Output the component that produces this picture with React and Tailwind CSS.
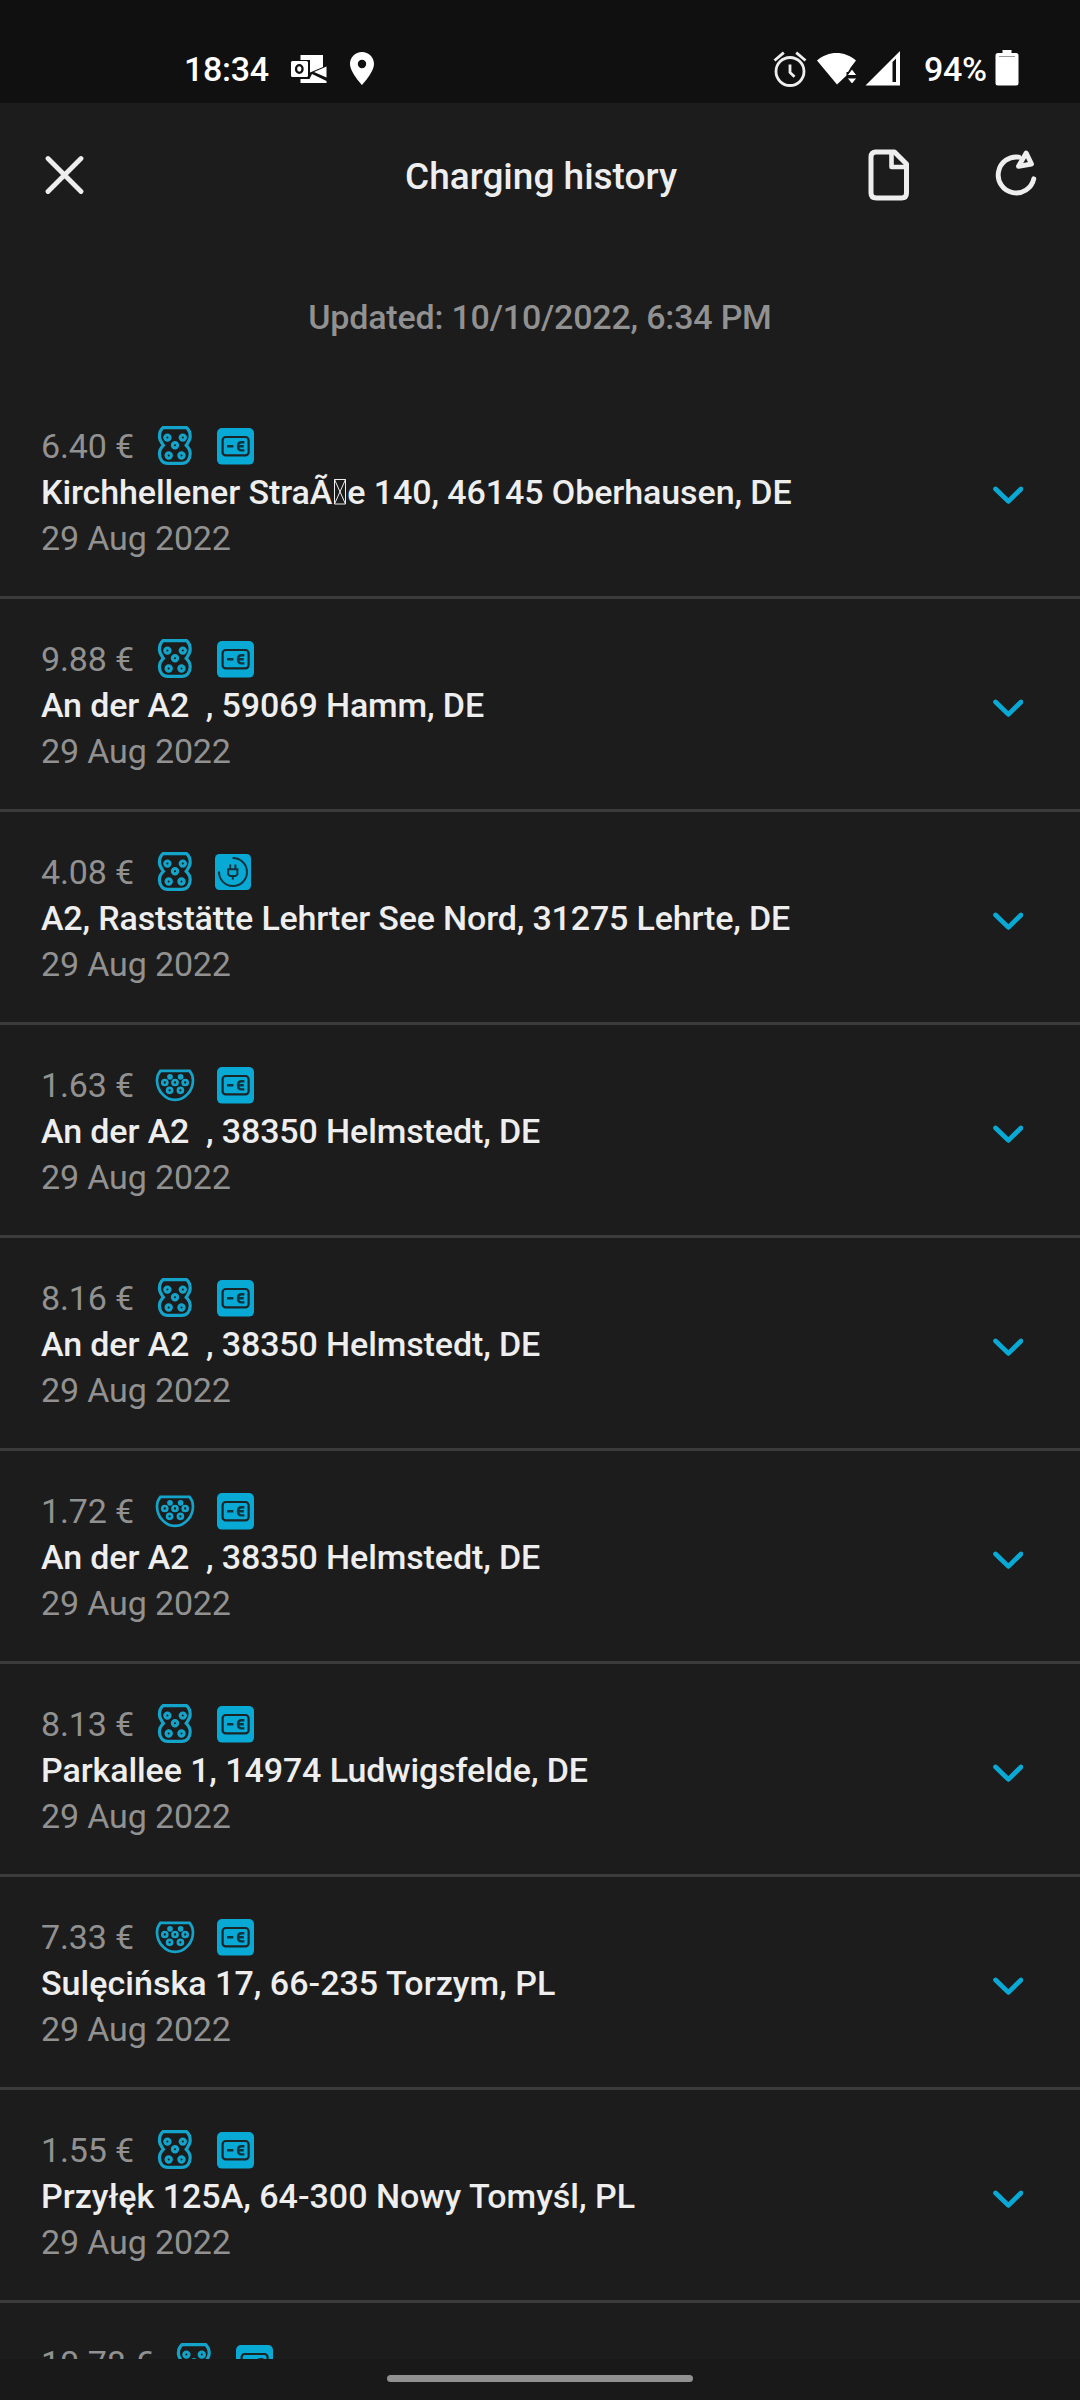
import React from "react";

const rows = [
  { price: "6.40 €", plug: "ccs", op: "card", address: ["Kirchhellener StraÃ", "e 140, 46145 Oberhausen, DE"], tracking: "tracking-[-0.09px]", date: "29 Aug 2022" },
  { price: "9.88 €", plug: "ccs", op: "card", address: ["An der A2  , 59069 Hamm, DE"], tracking: "tracking-[-0.13px]", date: "29 Aug 2022" },
  { price: "4.08 €", plug: "ccs", op: "plug", address: ["A2, Raststätte Lehrter See Nord, 31275 Lehrte, DE"], tracking: "tracking-[-0.17px]", date: "29 Aug 2022" },
  { price: "1.63 €", plug: "type2", op: "card", address: ["An der A2  , 38350 Helmstedt, DE"], tracking: "tracking-[-0.12px]", date: "29 Aug 2022" },
  { price: "8.16 €", plug: "ccs", op: "card", address: ["An der A2  , 38350 Helmstedt, DE"], tracking: "tracking-[-0.12px]", date: "29 Aug 2022" },
  { price: "1.72 €", plug: "type2", op: "card", address: ["An der A2  , 38350 Helmstedt, DE"], tracking: "tracking-[-0.12px]", date: "29 Aug 2022" },
  { price: "8.13 €", plug: "ccs", op: "card", address: ["Parkallee 1, 14974 Ludwigsfelde, DE"], tracking: "tracking-[-0.1px]", date: "29 Aug 2022" },
  { price: "7.33 €", plug: "type2", op: "card", address: ["Sulęcińska 17, 66-235 Torzym, PL"], tracking: "tracking-[0.03px]", date: "29 Aug 2022" },
  { price: "1.55 €", plug: "ccs", op: "card", address: ["Przyłęk 125A, 64-300 Nowy Tomyśl, PL"], tracking: "tracking-normal", date: "29 Aug 2022" },
  { price: "10.78 €", plug: "ccs", op: "card" },
];

function CcsIcon() {
  return (
    <svg width="40" height="42" viewBox="0 0 40 42" fill="none" stroke="#14a3c9" strokeWidth="3.2" className="shrink-0">
      <path d="M8.2 3.6H31.4C33.800 5.600 35.200 8.800 35.200 12.400C35.200 16 33 18.400 31.200 21.400C33.600 23.600 35.200 26.400 35.200 29.800C35.200 35.400 31.800 39.400 26.800 39.400H12.800C7.800 39.400 4.400 35.400 4.400 29.800C4.400 26.400 6 23.600 8.400 21.400C6.600 18.400 4.400 16 4.400 12.400C4.400 8.800 5.800 5.600 8.200 3.600Z" />
      <circle cx="12.4" cy="13.600" r="2.600" />
      <circle cx="27.800" cy="13.600" r="2.600" />
      <circle cx="20" cy="21.300" r="2.600" />
      <circle cx="13.700" cy="31.500" r="2.600" />
      <circle cx="26.500" cy="31.500" r="2.600" />
    </svg>
  );
}

function Type2Icon() {
  return (
    <svg width="40" height="42" viewBox="0 0 40 42" fill="none" stroke="#14a3c9" strokeWidth="2.7" className="shrink-0">
      <path d="M5.4 7.8H34.6C36.8 10.4 38 13.6 38 17.2C38 27.600 30 36.900 20 36.900C10 36.900 2 27.600 2 17.200C2 13.600 3.200 10.400 5.400 7.800Z" />
      <circle cx="15" cy="13.8" r="1.5" />
      <circle cx="25.6" cy="13.8" r="1.5" />
      <circle cx="9.8" cy="19.5" r="2.5" />
      <circle cx="20" cy="19.5" r="2.5" />
      <circle cx="30.2" cy="19.5" r="2.5" />
      <circle cx="14.6" cy="27.3" r="2.5" />
      <circle cx="25.4" cy="27.3" r="2.5" />
    </svg>
  );
}

function CardIcon() {
  return (
    <svg width="37" height="37" viewBox="0 0 37 37" fill="none" className="mt-[2px] ml-[22px] shrink-0">
      <rect width="37" height="36.6" rx="5" fill="#08a9d4" />
      <rect x="5.6" y="9" width="26" height="18.4" rx="3.2" stroke="#1c2426" strokeWidth="2.2" />
      <path d="M10 18.2H16.4M27.4 14.2H24.6C22.2 14.2 21 15 21 18.2C21 21.400 22.200 22.400 24.600 22.400H27.400M21 18.200H26.800" stroke="#10343e" strokeWidth="2.4" />
    </svg>
  );
}

function PlugIcon() {
  return (
    <svg width="36" height="37" viewBox="0 0 36 37" fill="none" className="mt-[2px] ml-[20px] shrink-0" stroke="#14323b" strokeWidth="2">
      <rect width="36" height="36" rx="4.5" fill="#08a9d4" stroke="none" />
      <path d="M17.6 4A14 14 0 1 1 4 17.4" />
      <path d="M13.2 15.2H22.4V20.4L20.6 22H15L13.2 20.4ZM15.2 15V10.4M20.4 15V10.4M17.8 22V25.4" />
    </svg>
  );
}

function MissingGlyph() {
  return (
    <svg width="15" height="26" viewBox="0 0 15 26" fill="none" stroke="#eeeeee" className="inline-block align-[-1px]">
      <path d="M2.5 .5H13.5V25H2.5ZM2.5 .5L13.5 25M13.5 .5L2.5 25" />
    </svg>
  );
}

function Row({ price, plug, op, address, tracking, date }) {
  return (
    <li className="flex h-[213px] shrink-0 border-b-[3px] border-[#3b3b3b] pt-[37px] pl-[41px]">
      <div className="flex w-[950px] shrink-0 flex-col text-[34px] leading-[46px] whitespace-pre">
        <div className="flex h-[46px] text-[#919191]">
          <span className="tracking-[-0.15px]">{price}</span>
          <div className="ml-[21px] flex h-[44px] items-center">
            {plug === "ccs" ? <CcsIcon /> : <Type2Icon />}
            {op === "card" ? <CardIcon /> : <PlugIcon />}
          </div>
        </div>
        {address && (
          <div className={`h-[46px] font-medium text-[#eeeeee] ${tracking}`}>
            {address[0]}
            {address[1] && (
              <>
                <MissingGlyph />
                {address[1]}
              </>
            )}
          </div>
        )}
        {date && <div className="h-[46px] tracking-[-0.14px] text-[#919191]">{date}</div>}
      </div>
      {address && (
        <svg width="32" height="20" viewBox="0 0 32 20" fill="none" stroke="#08a9d4" strokeWidth="4.8" strokeLinecap="round" strokeLinejoin="round" className="mt-[62px]">
          <path d="M4.6 4L17.4 16.4L30 4" />
        </svg>
      )}
    </li>
  );
}

function StatusBar() {
  return (
    <div className="flex h-[103px] shrink-0 items-center bg-[#101010] pt-[34px] pl-[184px] text-[34px] font-medium text-white">
      <span className="w-[106px] pt-[2px] tracking-[-0.3px]">18:34</span>
      <svg width="38" height="30" viewBox="0 0 38 30" fill="#fff">
        <path d="M10.5 1H33V13L20 18.5V6H10.5ZM10.5 25H19.5L22 20L36.5 27V29H10.5ZM36.5 12.5V23.5L24 18Z" />
        <path fillRule="evenodd" d="M2.5 7H16.5Q18 7 18 8.5V21.5Q18 23 16.5 23H2.5Q1 23 1 21.5V8.5Q1 7 2.5 7ZM9.3 10A4.4 5 0 1 0 9.3 20A4.4 5 0 1 0 9.3 10ZM9.3 12.3A2.1 2.7 0 1 1 9.3 17.7A2.1 2.7 0 1 1 9.3 12.3Z" />
      </svg>
      <svg width="24" height="33" viewBox="0 0 24 33" fill="#fff" className="ml-[22px]">
        <path fillRule="evenodd" d="M12 0C5.3 0 0 5.2 0 11.8C0 20.5 12 33 12 33S24 20.5 24 11.8C24 5.2 18.7 0 12 0ZM12 7.8A4.2 4.2 0 1 1 12 16.2A4.2 4.2 0 1 1 12 7.8Z" />
      </svg>
      <svg width="34" height="36" viewBox="0 0 34 36" fill="none" stroke="#eee" strokeWidth="2.8" className="ml-[399px]">
        <circle cx="17" cy="20.5" r="14" />
        <path d="M1.5 9.5L10.8 1.6M32.5 9.5L23.2 1.6M17 13.5V21.5L21.5 25.8" />
      </svg>
      <svg width="40" height="33" viewBox="0 0 40 33" fill="#fff" className="ml-[10px]">
        <path d="M0 8.5C11 -1.5 28 -1.5 39 8.5L34 15L31 20H29.5V23.5L20 32.5Z" />
        <path d="M30 23.5L35 17L40 23.5ZM30 26H40L35 32Z" stroke="#101010" strokeWidth="1" />
      </svg>
      <svg width="35" height="35" viewBox="0 0 35 35" fill="#fff" className="ml-[8px]">
        <path fillRule="evenodd" d="M35 0V34.5H0.5ZM27.5 11V31H31V7.5Z" />
      </svg>
      <span className="ml-[24px] w-[71px] pt-[2px] tracking-[-0.3px]">94%</span>
      <svg width="24" height="36" viewBox="0 0 24 36" className="mb-[1px]">
        <path fill="#fff" d="M7.5 0H16.5V3H21Q23.5 3 23.5 5.5V33Q23.5 35.5 21 35.5H3Q.5 35.5 .5 33V5.5Q.5 3 3 3H7.5Z" />
        <path stroke="#999" strokeWidth="1" d="M4 6.5H20" />
      </svg>
    </div>
  );
}

export default function App() {
  return (
    <div className="flex h-[2400px] w-[1080px] flex-col overflow-hidden bg-[#1c1c1c] font-['Roboto',sans-serif]">
      <StatusBar />
      <header className="flex h-[143px] shrink-0 items-center">
        <svg width="40" height="40" viewBox="0 0 40 40" stroke="#eee" strokeWidth="4.8" strokeLinecap="round" className="ml-[44px]">
          <path d="M4 3.5L37 36.5M37 3.5L4 36.5" />
        </svg>
        <h1 className="ml-[321px] w-[463px] pt-[4px] text-[37px] font-medium text-[#eee]">Charging history</h1>
        <svg width="42" height="52" viewBox="0 0 42 52" fill="none" stroke="#eee" strokeWidth="5" strokeLinejoin="round">
          <path d="M7 3H26.5L38.5 15V44Q38.5 49 33.5 49H8.5Q3 49 3 44V8Q3 3 8 3Z" />
          <path d="M23.5 4V18H38" strokeWidth="4.6" />
        </svg>
        <svg width="44" height="46" viewBox="0 0 44 46" fill="none" stroke="#eee" strokeWidth="4.9" strokeLinecap="round" strokeLinejoin="round" className="mb-[4px] ml-[85px]">
          <path d="M24 7.2A18 18 0 1 0 38.8 28.8" />
          <path d="M31.2 3L36.500 14L23.500 16.300Z" />
        </svg>
      </header>
      <p className="h-[140px] shrink-0 pt-[48px] text-center text-[34px] leading-[46px] font-medium tracking-[-0.2px] text-[#919191]">
        Updated: 10/10/2022, 6:34 PM
      </p>
      <ul className="flex h-[1973px] shrink-0 flex-col overflow-hidden">
        {rows.map((row, i) => (
          <Row key={i} {...row} />
        ))}
      </ul>
      <div className="flex h-[41px] shrink-0 items-center justify-center bg-[#191919] pb-[2px]">
        <div className="h-[7px] w-[306px] rounded-full bg-[#919191]" />
      </div>
    </div>
  );
}
